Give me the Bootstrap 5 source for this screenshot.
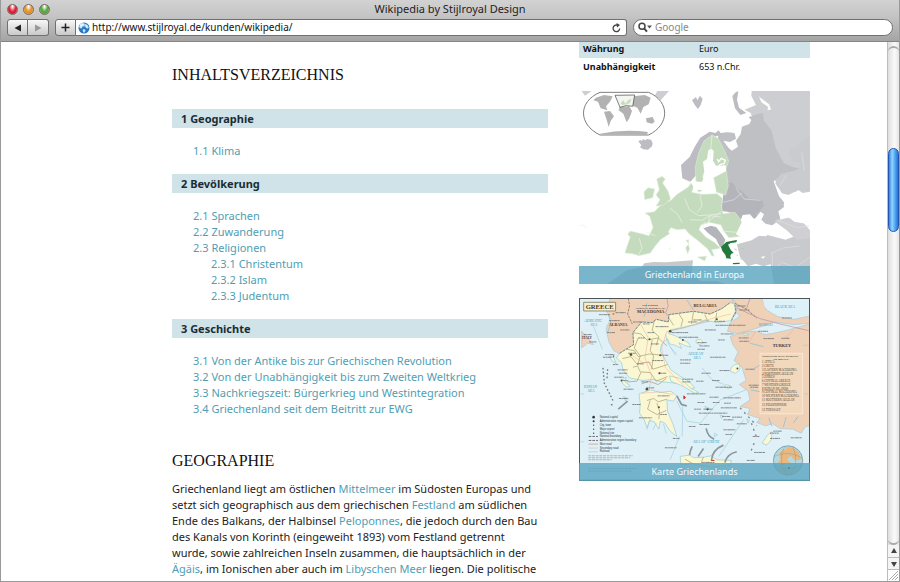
<!DOCTYPE html>
<html lang="de">
<head>
<meta charset="utf-8">
<meta name="viewport" content="width=device-width, initial-scale=1">
<title>Wikipedia by Stijlroyal Design</title>
<link href="https://cdn.jsdelivr.net/npm/bootstrap@5.3.0/dist/css/bootstrap.min.css" rel="stylesheet">
<style>
body{font-family:"Noto Sans","Open Sans",sans-serif;font-size:11px;line-height:16px;color:#222;background:#fff}
.app-window{height:100vh;border:1px solid #999;border-top:0;background:#fff}
.chrome{background:linear-gradient(#d2d2d2,#c4c4c4 40%,#a4a4a4);border-bottom:1px solid #858585;color:#222}
.title-bar{height:18px;padding:0 6px;display:grid;grid-template-columns:1fr auto 1fr}
.lights{gap:5px}
.light{width:11px;height:11px;border-radius:50%;border:1px solid #7c6b62;padding:0}
.light-red{background:radial-gradient(ellipse at 50% 15%,#fff 5%,#ea4a5d 40%,#ce1432 60%,#ff8c9a)}
.light-yellow{background:radial-gradient(ellipse at 50% 15%,#fff 5%,#eda44a 40%,#df8b25 60%,#ffe47c)}
.light-green{background:radial-gradient(ellipse at 50% 15%,#fff 5%,#6fba5b 40%,#4a9f3d 60%,#bdf58e)}
.tool-bar{padding:1px 6px 5px;gap:6px}
.tool{height:17px;width:21px;padding:0;border:1px solid #707070;background:linear-gradient(#f8f8f8,#c9c9c9);display:flex;align-items:center;justify-content:center}
.tool.first{border-radius:3px 0 0 3px}
.tool.last{border-radius:0 3px 3px 0;border-left:0}
.address{height:17px;border:1px solid #707070;border-left:0;background:#fff;border-radius:0 3px 3px 0;padding:0 5px 0 2px;gap:2px}
.search-box{height:17px;width:260px;border:1px solid #707070;background:#fff;border-radius:9px;padding:0 8px 0 4px;gap:3px}
.plain-field{border:0;outline:0;padding:0;min-width:0;background:none;font-size:10px;line-height:15px;height:15px;color:#111}
.search-box .plain-field::placeholder{color:#888;opacity:1}
.mini-btn{border:0;background:none;padding:0;display:flex}
.page-grid{display:grid;grid-template-columns:376fr 231fr;column-gap:31px;padding:0 77px 0 171px}
.page-grid a{color:#4f9eb3;text-decoration:none}
.section-title{font-family:"Liberation Serif",Georgia,serif;font-size:16px;line-height:20px;margin:0;color:#111}
.toc-title{margin-top:23px;margin-bottom:24px}
.text-title{margin-top:34px;margin-bottom:10px}
.toc-head{background:#d0e3e9;font-size:11px;line-height:19px;font-weight:700;padding:0 9px;margin:0;color:#1b2d34}
.toc-list{list-style:none;margin:15px 0;padding-left:21px}
.toc-list ul{list-style:none;margin:0;padding-left:18px}
.facts{width:100%;font-size:9px;line-height:18px;margin:-2px 0 15px;color:#111}
.facts th,.facts td{padding:0 4px;font-weight:400}
.facts th{width:116px;font-weight:700}
.facts .shade{background:#d0e3e9}
.map-fig{margin:0 0 14px;position:relative}
.map-fig svg{display:block;width:100%;height:auto}
.map-fig figcaption{position:absolute;left:0;right:0;bottom:0;line-height:18px;font-size:9px;text-align:center;color:#f6fbfd;background:rgba(88,164,191,.8)}
.scroll-track{width:12px;border-left:1px solid #bcbcbc;background:linear-gradient(90deg,#dedede,#fafafa 60%,#e4e4e4);display:grid;grid-template-rows:106fr 84fr 313fr 13px 12px 11px}
.scroll-thumb{border-radius:6px;border:1px solid #1e56b8;background:linear-gradient(90deg,#3184de,#9ad4fb 35%,#59b2f6 60%,#2674d6)}
.scroll-cap{border-radius:6px 6px 0 0;border-top:2px solid #aaa;margin-top:4px}
.scroll-end{border-radius:0 0 6px 6px;border-bottom:2px solid #aaa}
.arrow-btn{border:0;border-bottom:1px solid #bbb;padding:0;background:#f4f4f4;display:flex;align-items:center;justify-content:center}
</style>
<script src="https://cdn.jsdelivr.net/npm/bootstrap@5.3.0/dist/js/bootstrap.bundle.min.js"></script>
</head>
<body>
<div class="app-window d-flex flex-column overflow-hidden">
<header class="chrome flex-shrink-0">
  <div class="title-bar align-items-center">
    <div class="lights d-flex"><button class="light light-red" aria-label="Schließen"></button><button class="light light-yellow" aria-label="Minimieren"></button><button class="light light-green" aria-label="Vergrößern"></button></div>
    <div>Wikipedia by Stijlroyal Design</div><div></div>
  </div>
  <div class="tool-bar d-flex align-items-center">
    <div class="d-flex">
      <button class="tool first" aria-label="Zurück"><svg width="8" height="8" viewBox="0 0 8 8"><path d="M7 .5v7L.5 4z" fill="#222"/></svg></button>
      <button class="tool last" aria-label="Vorwärts"><svg width="8" height="8" viewBox="0 0 8 8"><path d="M1 .5v7L7.500 4z" fill="#999"/></svg></button>
    </div>
    <div class="d-flex flex-grow-1">
      <button class="tool first" aria-label="Lesezeichen hinzufügen"><svg width="9" height="9" viewBox="0 0 9 9"><path d="M4.500.5v8M.5 4.500h8" stroke="#222" stroke-width="1.500"/></svg></button>
      <div class="address d-flex flex-grow-1 align-items-center">
        <svg width="12" height="12" viewBox="0 0 12 12"><circle cx="6" cy="6" r="5.500" fill="#2876c4"/><path d="M2 2.500 4 1l2 .8-.5 1.700L4 4.200 4.300 6 2.800 6.500 1 5zM7.500 2l2 1 1.300 2.500-1 1-1.700-.5-1-1.500zM5 7l2 .6.6 1.200L6 11 4.700 9z" fill="#c9e6f6"/><ellipse cx="5" cy="3" rx="3" ry="1.700" fill="#fff" opacity=".6"/></svg>
        <input class="plain-field flex-grow-1" type="text" aria-label="Adresse" value="http://www.stijlroyal.de/kunden/wikipedia/">
        <button class="mini-btn" aria-label="Neu laden"><svg width="9" height="10" viewBox="0 0 9 10"><path d="M7.700 5.500A3.300 3.300 0 1 1 5.500 2.200" fill="none" stroke="#444" stroke-width="1.300"/><path d="M4.500 0 8 2 5 4.500z" fill="#444"/></svg></button>
      </div>
    </div>
    <div class="search-box d-flex align-items-center">
      <svg width="14" height="11" viewBox="0 0 14 11"><circle cx="4" cy="4.300" r="3" fill="none" stroke="#444" stroke-width="1.500"/><path d="m6.300 6.700 2.700 3" stroke="#444" stroke-width="2"/><path d="M9 3.500h5l-2.500 3z" fill="#555"/></svg>
      <input class="plain-field flex-grow-1" type="text" aria-label="Google-Suche" placeholder="Google">
    </div>
  </div>
</header>
<div class="d-flex flex-grow-1 overflow-hidden">
<main class="flex-grow-1 overflow-hidden">
<div class="page-grid">
  <article>
    <h2 class="section-title toc-title">INHALTSVERZEICHNIS</h2>
    <nav aria-label="Inhaltsverzeichnis" class="d-block">
      <h3 class="toc-head">1 Geographie</h3>
      <ul class="toc-list"><li><a href="#">1.1 Klima</a></li></ul>
      <h3 class="toc-head">2 Bevölkerung</h3>
      <ul class="toc-list">
        <li><a href="#">2.1 Sprachen</a></li><li><a href="#">2.2 Zuwanderung</a></li>
        <li><a href="#">2.3 Religionen</a>
          <ul><li><a href="#">2.3.1 Christentum</a></li><li><a href="#">2.3.2 Islam</a></li><li><a href="#">2.3.3 Judentum</a></li></ul></li>
      </ul>
      <h3 class="toc-head">3 Geschichte</h3>
      <ul class="toc-list">
        <li><a href="#">3.1 Von der Antike bis zur Griechischen Revolution</a></li>
        <li><a href="#">3.2 Von der Unabhängigkeit bis zum Zweiten Weltkrieg</a></li>
        <li><a href="#">3.3 Nachkriegszeit: Bürgerkrieg und Westintegration</a></li>
        <li><a href="#">3.4 Griechenland seit dem Beitritt zur EWG</a></li>
      </ul>
    </nav>
    <h2 class="section-title text-title">GEOGRAPHIE</h2>
    <p class="mb-0 text-nowrap">Griechenland liegt am östlichen <a href="#">Mittelmeer</a> im Südosten Europas und<br>
    setzt sich geographisch aus dem griechischen <a href="#">Festland</a> am südlichen<br>
    Ende des Balkans, der Halbinsel <a href="#">Peloponnes</a>, die jedoch durch den Bau<br>
    des Kanals von Korinth (eingeweiht 1893) vom Festland getrennt<br>
    wurde, sowie zahlreichen Inseln zusammen, die hauptsächlich in der<br>
    <a href="#">Ägäis</a>, im Ionischen aber auch im <a href="#">Libyschen Meer</a> liegen. Die politische</p>
  </article>
  <aside>
    <table class="facts">
      <tr class="shade"><th scope="row">Währung</th><td>Euro</td></tr>
      <tr><th scope="row">Unabhängigkeit</th><td>653 n.Chr.</td></tr>
    </table>
    <figure class="map-fig">
      <svg viewBox="27 18 693 580" role="img" aria-label="Karte von Europa">
        <path fill="#fff" d="M27 18h693v580H27z"/>
        <path fill="#ceced2" d="M262 18h35l-25 28-18-14zM35 18h30l-20 14z"/>
        <!-- Russland, Kaukasus, Vorderasien -->
        <path fill="#cdced1" d="M545 18h175v302l-22 4-18-12-18 12-40-20-80-220-18-10 34-14-14-28z"/>
        <path fill="#bfc0c4" d="M446 148q18-10 48-3l4 16-18 10-20-4 16 22 10 8 18-12-6-18 14-20 4-22 22-8 6-12-8-8 20-8 22-6 4 24 22 28 14 56 24 44 28 12 25 4-20 14-44 8-20 16 16 44 22 28-24 18 6 24-24 18-28-6-22-10-16-26-34-26-32-18-14-30-2-32 8-8-2-18-14-28-16-20z"/>
        <path fill="#cacbce" d="m659 192 18-4 28-28 15-4v162l-34-3-28 16-22-6-20-30 16-28 48-12 18-18-30-8-10-20z"/>
        <path fill="#bcbcc2" d="M487 34q10-16 18-14l-4 24 6 24 22 16-18 6-16-20zM366 46l12-10 4 10 8-14 8 10-6 18-8 12-8-10zM205 169l7-5 3 5 4-7 6 4 6-4 12 2 5 10-2 10-12 10-14-1-10-6 4-6zM333 240l26-24 16-32 16-26 28-18 18 4 8-8 12 14-42 8-18 26-8 50-10 36-18 20-24-10z"/>
        <path fill="#b4b4bb" d="m464 296 22-4 14 18 20 12 16 18 40 4 6 18-12 14-12 12 10 16-18-4-10-12-22 2-8 20-10-10-4-12-24-8-18-2 4-36zM400 430l22-8 16 4 16 20 12 18-8 24-8-2-12-24-24-18zM334 410l14-6 14 12-16 10z"/>
        <path fill="#c9cacd" d="m501 478 44-12 32-20 30 8 40 10 36-14 37 10v138H612l-10-60-22 6-22-8-24 8-24-28z"/>
        <path fill="#d0d0d4" d="m612 408 42-10 40 8 26 30v24l-40 4-30-28z"/>
        <path fill="#c7c8cb" d="m215 547 8-12 28-4 36 1 82-6-4 34 26 28h52l24 10H110l60-42z"/>
        <!-- Europäische Union -->
        <g fill="#c4dcbd" stroke="#e4eedd" stroke-width="1.500">
          <path d="m376 246 10-42 16-36 24-18 18 10 20 38 12 30-8 24-40 12-26-2-4 16 10 14-6 22-16 8-8-20z"/>
          <path d="m431 278 38-20 6 44-8 28-28-8zM355 306l8-12 8 12-6 16 30 6 46-2 16 14-2 26 4 20 36-4 14 18 10 20-6 34-36 4-16-20-8-18-36-8-24 8-6 14 20 22 26 16 18 18-12 2-14 2 8 20-8-2-12-20-28-24-28-22-12-14-24 2-18-6-8 12 4 6-28 18-16 20-14 20-34 8-20-6-22-2 6-20 10-28-8-8 8-10 34 8 22 6 12-24-10-34-14-10 28-4 16-16 14-10 20-8 18-18z"/>
          <path d="m260 282 16-8 10 8-8 12 16 24 8 24-20 18-24 4 12-20-12-14 10-16zM222 320l12-12 20 4-6 26-24 6zM347 488l8-10 4 14-6 14zM382 516l28-2-6 14zM348 466l8-2v12z"/>
        </g>
        <path fill="#fff" d="M403 260l-4-30 12-8 4-26 8-5 8 6-2 31 10 15 28-2 2 18-30 4-22 8-2 22 18 4 4 18-36 2-32-6 6-22 20 2 8-14zM512 418l16-26 14 8 12 2 18-22 10 8-8 16 20 20 20 8-26 22-48-4-20 10-22-12zM655 330l20-10 12 24-8 14 14 24 14 34-34-6-28-22-4-30z"/>
        <path d="m442 222 4 8 8-10 12 6-4 10-10 2-8 6" fill="none" stroke="#fff" stroke-width="4"/>
        <path d="M426 150l-6 70M300 370l22 16 14 26M344 340l14 34 28 18 30-2 38-4M390 330l6 34-14 18M360 404l36 2 24-14 32 4M415 410l38-30M208 460l8 30-10 20M256 452l-28-12M452 438l50 4M404 410l-6 18M420 392l-8 30" fill="none" stroke="#edf3e9" stroke-width="2"/>
        <path d="m460 352 32-8 24-20M604 505l36-16 48-6M606 500l2 52 30-20 38 16 44-32M498 310l24 32 50 4M630 300l20-30M695 200l8 56M620 404l60 24 38-6" fill="none" stroke="#dfdfe3" stroke-width="2"/>
        <path fill="#23793b" d="m453 486 16-15 18-4 14-2-2 7-17 2-8 5 8 15 9 10-7 2-6 12-7-2-14-18zM466 509l13-2 4 14-14-1zM488 534l22-1-2 4-18 1z"/>
        <path d="M514 490l8 2M494 492l6 2M500 510l3 2M512 520l3 4" stroke="#a9cfa9" stroke-width="3"/>
        <path d="m566 34 32 24 6 16-12 2 2-10-20-14zM572 516l14-4-6 10zM295 488l8 6" fill="#fff" stroke="#bfd9b9"/>
        <path d="m30 422 10-2 10 8" fill="none" stroke="#ddd"/>
        <!-- Weltkarte -->
        <path d="M90 22h146c64 28 64 96 0 128H90c-66-32-66-100 0-128z" fill="#fff" stroke="#7d7d7d" stroke-width="3"/>
        <path fill="#b2b2b2" d="m78 38 24-8 26 4-8 16-12 14 4 12-20-6-8-20-14-4zM102 80l18-2 12 16-10 14-6 18-6-22zM148 66l30-2 8 14-8 22-8 12-10-26-14-10zM190 34l34-4 18 8-6 20-16 8-8 20-10-18-20-8zM228 100l20-4 6 14-8 6-16-4zM90 146q70-14 144-5l-4 8H96z"/>
        <path d="m135 31 59-1-6 34q-20-6-38 3z" fill="#f2f5f0" stroke="#444" stroke-width="2"/>
        <path d="m152 54 8-8 6 10 10-12 8-2-4 12-10 4-14 2z" fill="#c8dcbd"/>
      </svg>
      <figcaption>Griechenland in Europa</figcaption>
    </figure>
    <figure class="map-fig">
      <svg viewBox="26 24 694 549" role="img" aria-label="Karte Griechenlands" font-family="Liberation Serif,serif">
        <path fill="#e0f0f7" d="M26 24h694v549H26z"/>
        <path fill="#efd1b8" stroke="#a9c9d5" stroke-width="2" d="M120 24h366l14 20-4 30-200 50-76 20-68 50-22-12-14-26-8-34 2-14 12-20-14-26zM488 24h88l14 36 34 20 48 8 48-10v22l-50 4-56-8-40 14-66 22-36-8 8-26 30-20-24-20zM480 140l36-14 44-2 24 10 26-4 44-10 66-18v306l-14 2-12 20-26-12-38-2-22-14-22 6-26-10 10-12-38-12 8-18-30-6 30-20-6-26-26-20 20-12-12-40-24-20 12-26-16-22zM34 124l18 18 18 22-18-4-18 14z"/>
        <path fill="#fbf7d3" stroke="#8ecbdc" stroke-width="2" d="m148 190 42-26-2-36 26-32 32 2 12-10 36 8 2-22 74-10 50 8 35-16 25-18 14 4 2 22-14 28-42 6-36-8-28 14-30 6-46 10-6 10 22 8 38 20 8 14-20-6-16-8 8 18-18-10-18-4-6-16-18 16-4 22 14 24 18 32 26 18 30 18 16 18-14 2-26-14-36-4-24-2-26-8-30 4-40-8-20-24-4-22-16-14z"/>
        <g fill="#fbf7d3" stroke="#8ecbdc" stroke-width="2">
          <path d="m206 312 36-12 28 8 32-4 18 14-10 16-20-4 2 34 16 38 12 38-20-16-16-24-14-6-4 24-14-22-14-4-8 22-8-24-14-20 2-28z"/>
          <path d="m298 258 34 8 28 28 26 14-12 2-38-22-34-14zM330 500l28-4 14 8 30-2 22-4 16 12 44 2-4 14-54 6-58-10-36 2zM576 460l16-24 14-10-2 24-14 16zM484 232l10-8 14-2 2 16-14 12-16-6zM466 284l14 4-4 8-14-6zM378 150l12-2 10 10-12 6-10-6zM154 270l14-8-4 14 16 12-10 4-14-12zM118 198l12 4 8 20-14-10zM404 350l12 4-4 8zM450 376l10 2-6 8zM530 388l8 4-4 8zM434 430l8 6-10 4zM520 130l16 4-12 4zM160 320l12 6-6 8z"/>
        </g>
        <path d="M188 128l24 4 18 18 34-6 26 24M168 178l24 4 12 18 34-8 38 4M156 206l26-6 18 22 36-6 12 22 44-14M188 232l14-4 8 18 30 2 18 26 34-14M212 248l-12 26-30 2M252 92l-6 30 20 18-8 26M296 84l14 22M326 72l12 18-6 20M370 66l-6 36M404 74l10 22M440 68l-4 24M204 144l-12 30 18 24-8 28M246 150l-6 32 10 16-6 40M230 332l20-6 14 10 26-8M240 332l-8 26 28 16 28-12M260 340l8 24-2 24M214 282l22-8 28 10 24-18M344 508l24 14M400 502l-6 14" fill="none" stroke="#a59a6b" stroke-width="2"/>
        <path d="M148 190l42-26-2-36 26-32 32 2 12-10 36 8 2-22 74-10 50 8 35-16 25-18M174 24l4 24-6 24 14 30M484 92l14-28-4-20M494 40l36 18 30 26" fill="none" stroke="#705c4a" stroke-width="2" stroke-dasharray="8 3"/>
        <path d="M290 24l4 24-8 20 10 12M500 54l70 32 60 16 86 20M540 24l-10 30" fill="none" stroke="#b28ca5" stroke-width="2"/>
        <path d="M210 100l24 44-10 60 20 54-8 44M290 124l-16 50 12 60 54 52M290 124l50-10 76-26 66-16M182 194l36 24 26 0M216 310l52-4 40 8M556 124l-20 34M640 150l30-30" fill="none" stroke="#e6aa9a" stroke-width="1.500"/>
        <path d="M112 128l10-30-8-24M230 40l-8 40M350 30l20 30M540 160l40 10M552 236l20-12M542 300l30 6M606 410l-10-26M640 412l8-30M670 400l14-20" fill="none" stroke="#7bbdd3" stroke-width="2"/>
        <path d="M286 132q6 40 34 60M300 170l16 26M396 234l28 34 38 16M338 340l-2 100M390 400l60-70 78-30M300 510l28-70M446 500l74-110M70 110l26 68M240 388l-10 32M258 400l-10 20M280 402l8 30M30 312h12M700 312h14M30 456h12M700 166h16M388 24v8M540 24v8M320 334l30 60 40 6" fill="none" stroke="#9ecfdf" stroke-width="2"/>
        <path fill="#dff1f8" d="m578 26 140 3v46l-50 10-58-14-26-20z"/>
        <!-- Tiefenlinien und Ortsnamen -->
        <path d="M98 234l4 46 28 56M122 346l8-4M112 238l-2 30" fill="none" stroke="#6f7b82" stroke-width="4" stroke-dasharray="5 6"/>
        <path d="M144 358l28-24M320 318l14 26 16 4M408 416q4 24 24 32M358 496q2-14 8-26M384 500l16-24M424 512q2-32 36-46M464 518q8-26 36-32" fill="none" stroke="#8b979e" stroke-width="5"/>
        <path d="M510 354l50 54M544 400l18 50M552 460l-10 26" fill="none" stroke="#7d898e" stroke-width="4" stroke-dasharray="6 12"/>
        <g fill="none" stroke="#6a7072" stroke-width="3" stroke-dasharray="7 1 4 1 12 1" opacity=".8">
          <path d="M86 74h34M136 68h30M116 92h32M110 128h24M150 120h28M104 194h28M98 202h28M128 224h16M142 240h30M146 250h26M132 262h28M160 298h30M146 326h28M186 344h26M158 272h16M404 120h34M452 132h38M330 210h32M330 220h30M420 202h46M394 250h28M426 272h22M436 292h50M336 268h34M336 276h26M378 274h22M350 312h56M418 322h28M382 338h20M428 338h20M460 324h22M482 324h30M462 340h20M372 358h20M400 358h28M386 370h44M432 370h40M452 354h48M356 410h20M388 404h30M456 380h24M460 390h30M460 420h36M466 434h20M500 402h30M486 382h30M548 440h20M610 424h26M600 446h30M606 430h20M552 488h34M530 512h24M284 474h36M308 446h20M206 384h40M394 518h40M500 48h28M508 60h30M436 106h90M506 144h30M580 146h32M634 145h24M564 124h30M636 84h30M508 154h28M536 286h30M540 292h24M526 238h28M40 134h24M56 156h22M304 128h50M326 142h36M204 144h20M188 96h28M218 102h20M256 110h40M174 190h22M246 212h34M214 276h20M228 294h24M262 318h36M270 374h20M360 142h24M382 158h28M382 178h22M388 168h30M444 150h20M448 242h30M662 444h34M242 162h24M200 222h20M270 196h24M264 250h24M354 96h28M370 90h26M432 94h34M232 128h20"/>
        </g>
        <g fill="#564d32"><circle cx="182" cy="194" r="4"/><circle cx="238" cy="148" r="3"/><circle cx="300" cy="124" r="4"/><circle cx="230" cy="298" r="4"/><circle cx="266" cy="352" r="3"/><circle cx="270" cy="196" r="3"/><circle cx="338" cy="150" r="3"/><circle cx="502" cy="236" r="3"/><circle cx="412" cy="358" r="3"/><circle cx="440" cy="88" r="3"/><circle cx="268" cy="250" r="3"/><circle cx="154" cy="272" r="3"/></g>
        <path d="m341 318 5 5-5 4zM600 430h4M130 196v6M127 72h5M423 512h10" fill="#c33" stroke="#c33" stroke-width="3"/>
        <path fill="#f7f0ca" stroke="#655d4b" stroke-width="2" d="M40 37h96v26H40z"/>
        <g fill="#46372e" font-weight="bold">
          <text x="46" y="57" font-size="20">GREECE</text>
          <text x="370" y="52" font-size="13">BULGARIA</text><text x="200" y="70" font-size="13">MACEDONIA</text>
          <text x="116" y="109" font-size="12">ALBANIA</text><text x="608" y="171" font-size="13">TURKEY</text>
          <text x="216" y="48" font-size="7">THE FORMER</text><text x="196" y="57" font-size="7">YUGOSLAV REPUBLIC OF</text><text x="35" y="148" font-size="10">ITALY</text>
        </g>
        <g fill="#43a2c4" font-size="12" font-style="italic">
          <text x="42" y="95">ADRIATIC</text><text x="60" y="107">SEA</text><text x="614" y="53">BLACK SEA</text><text x="353" y="194">AEGEAN</text><text x="370" y="208">SEA</text><text x="40" y="293">IONIAN</text><text x="52" y="305">SEA</text><text x="369" y="461">SEA OF CRETE</text><text x="566" y="107" font-size="9">MARMARA</text>
        </g>
        <path fill="#f2d9bd" stroke="#fff2dc" stroke-width="2" d="M570 190h128v182H570z"/>
        <g fill="#493e31" font-size="9"><text x="574" y="200" font-size="8" font-weight="bold">ADMINISTRATIVE REGIONS</text><text x="610" y="210" font-size="8" font-weight="bold">OF GREECE</text><text x="576" y="220">1 ATTICA</text><text x="576" y="231">2 CRETE</text><text x="576" y="243">3 EASTERN MACEDONIA</text><text x="576" y="254">4 NORTHERN AEGEAN</text><text x="576" y="265">5 EPIRUS</text><text x="576" y="276">6 CENTRAL GREECE</text><text x="576" y="288">7 WESTERN GREECE</text><text x="576" y="299">8 IONIAN ISLANDS</text><text x="576" y="310">9 CENTRAL MACEDONIA</text><text x="576" y="322">10 WESTERN MACEDONIA</text><text x="576" y="334">11 SOUTHERN AEGEAN</text><text x="576" y="350">12 PELOPONNESE</text><text x="576" y="365">13 THESSALY</text></g>
        <g fill="#2c3941" font-family="Liberation Sans,sans-serif" font-size="8"><circle cx="70" cy="382" r="4"/><circle cx="70" cy="394" r="3"/><circle cx="70" cy="406" r="2"/><circle cx="70" cy="418" r="2"/><circle cx="70" cy="430" r="2"/><text x="88" y="385">National capital</text><text x="88" y="397">Administrative region capital</text><text x="88" y="409">City, town</text><text x="88" y="420">Major airport</text><text x="88" y="432">National site</text><text x="88" y="443">National boundary</text><text x="88" y="455">Administrative region boundary</text><text x="88" y="466">Main road</text><text x="88" y="478">Secondary road</text><text x="88" y="488">Railroad</text></g>
        <path d="M55 440h28M55 452h28" stroke="#333" stroke-width="2" stroke-dasharray="8 3"/><path d="M55 463h28" stroke="#d6847c" stroke-width="2"/><path d="M55 475h28M55 486h28" stroke="#8e9ca2"/>
        <path d="M54 498h134M54 504h126M54 510h70M54 536h146M54 544h130" stroke="#8a9ba2" stroke-width="2" stroke-dasharray="9 2"/>
        <circle cx="654" cy="512" r="44" fill="#b4d8e2" stroke="#638996" stroke-width="2"/>
        <path d="m628 490 12-12 8 4 2-10 20 2 16 14 8 22-20 2-12-14-12 12 16 12-4 8-10-8-10 4-12 4-6-14 8-6-4-8z" fill="#e8b880"/><path d="m620 536 26-4 14 6 26-6-6 14-24 9-24-7z" fill="#e8b880"/>
        <path d="M612 500q42-20 84 4M612 526q42 20 84 0M644 470q-24 44 8 86M668 470q22 44-8 86" stroke="#718b91" fill="none"/><circle cx="657" cy="535" r="3" fill="#222"/>
        <path d="M27 25h692v547H27z" fill="none" stroke="#4f5557" stroke-width="4"/>
      </svg>
      <figcaption>Karte Griechenlands</figcaption>
    </figure>
  </aside>
</div>
</main>
<div class="scroll-track flex-shrink-0">
  <div class="scroll-cap"></div><div class="scroll-thumb"></div><div class="scroll-end"></div>
  <button class="arrow-btn" aria-label="Nach oben"><svg width="6" height="6" viewBox="0 0 6 6"><path d="M3 0l3 5H0z" fill="#444"/></svg></button>
  <button class="arrow-btn" aria-label="Nach unten"><svg width="6" height="6" viewBox="0 0 6 6"><path d="M0 1h6L3 6z" fill="#444"/></svg></button>
  <svg width="11" height="11" viewBox="0 0 11 11"><path fill="#fff" d="M0 0h11v11H0z"/><path d="M1 10l9-9M4 10l6-6M7 10l3-3" stroke="#aaa"/></svg>
</div>
</div>
</div>
</body>
</html>
